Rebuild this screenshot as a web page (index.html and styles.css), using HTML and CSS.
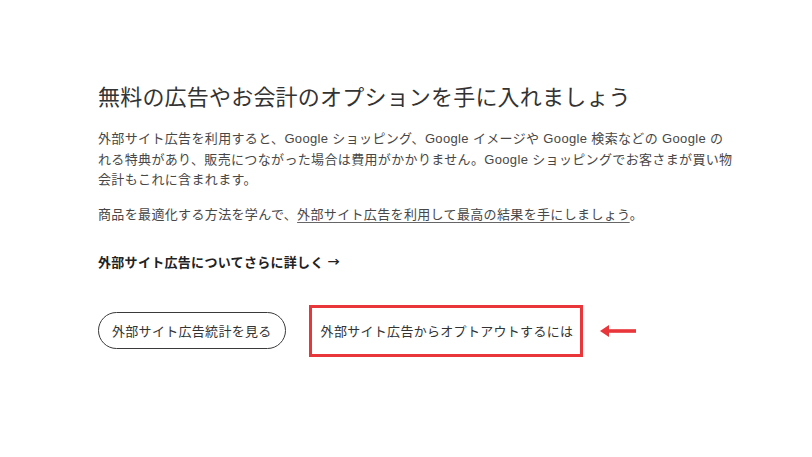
FILE: index.html
```html
<!DOCTYPE html>
<html lang="ja">
<head>
    <meta charset="UTF-8">
    <meta name="viewport" content="width=device-width, initial-scale=1.0">
    <title>外部サイト広告</title>
    <link rel="stylesheet" href="styles.css">
</head>
<body>
    <div class="panel">
        <h1 class="title">無料の広告やお会計のオプションを手に入れましょう</h1>

        <p class="intro">
            <span class="line">外部サイト広告を利用すると、Google ショッピング、Google イメージや Google 検索などの Google の</span>
            <span class="line">れる特典があり、販売につながった場合は費用がかかりません。Google ショッピングでお客さまが買い物</span>
            <span class="line">会計もこれに含まれます。</span>
        </p>

        <p class="intro">商品を最適化する方法を学んで、<a href="#" class="inline-link">外部サイト広告を利用して最高の結果を手にしましょう</a>。</p>

        <a href="#" class="more-link">外部サイト広告についてさらに詳しく <span class="more-arrow">→</span></a>

        <div class="actions">
            <button class="pill-btn">外部サイト広告統計を見る</button>
            <div class="highlight">
                <a href="#" class="plain-btn">外部サイト広告からオプトアウトするには</a>
            </div>
            <svg class="arrow" width="38" height="12" viewBox="0 0 38 12">
                <polygon points="0,6 9,0 9,12" fill="#e8363b"/>
                <rect x="8" y="4.2" width="28" height="3.6" fill="#e8363b"/>
            </svg>
        </div>
    </div>
</body>
</html>
```

FILE: styles.css
```css
body {
    margin: 0;
    background-color: #ffffff;
    font-family: "Liberation Sans", "Noto Sans CJK JP", sans-serif;
    color: #3b3b3b;
}
.panel {
    width: 636px;
    margin: 70px 0 0 85px;
    padding: 13px 0 27px 13px;
    overflow: hidden;
}
.title {
    margin: 0;
    font-size: 22px;
    line-height: 30px;
    font-weight: 400;
    letter-spacing: 0.2px;
    color: #333333;
}
.intro {
    margin: 16px 0 0;
    font-size: 13px;
    line-height: 20.5px;
    letter-spacing: 0.35px;
    color: #474747;
}
.intro + .intro {
    margin-top: 14px;
}
.line {
    display: block;
    white-space: nowrap;
}
.inline-link {
    color: #474747;
    text-decoration: underline;
    text-underline-offset: 3px;
    text-decoration-color: #666;
}
.more-link {
    display: block;
    margin-top: 27px;
    font-size: 13px;
    line-height: 20.5px;
    font-weight: 700;
    letter-spacing: 0.3px;
    color: #222222;
    text-decoration: none;
}
.more-arrow {
    font-family: "Noto Sans CJK JP", sans-serif;
    font-weight: 700;
    font-size: 12px;
}
.actions {
    display: flex;
    align-items: center;
    margin-top: 31px;
}
.pill-btn {
    height: 37px;
    padding: 0 13px;
    border: 1.5px solid #3a3a3a;
    border-radius: 19px;
    background: #ffffff;
    font-family: inherit;
    font-size: 13px;
    letter-spacing: 0.3px;
    color: #333333;
}
.highlight {
    display: flex;
    align-items: center;
    height: 46px;
    margin-left: 23px;
    padding: 0 7px 0 9px;
    border: 3px solid #e8363b;
}
.plain-btn {
    font-size: 13px;
    letter-spacing: 0.3px;
    color: #333333;
    text-decoration: none;
}
.arrow {
    margin-left: 17px;
}
```
